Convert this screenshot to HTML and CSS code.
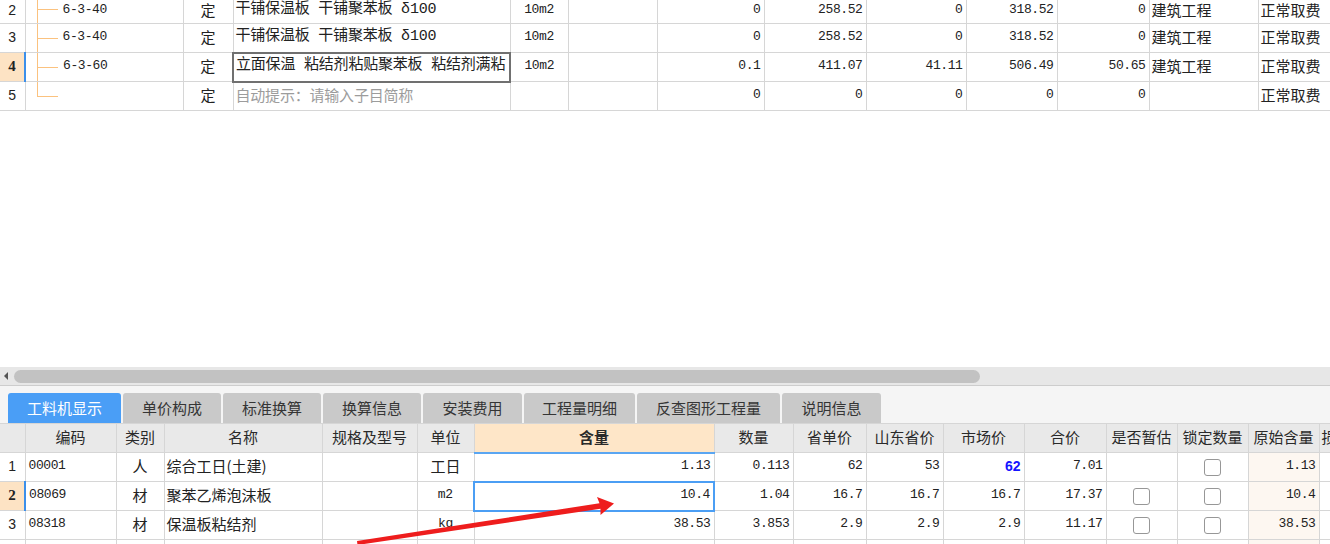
FILE: index.html
```html
<!DOCTYPE html>
<html lang="zh-CN">
<head>
<meta charset="utf-8">
<title>工料机显示</title>
<link rel="stylesheet" href="styles.css">
</head>
<body>
<div class="app">
  <div class="upper">
    <table class="grid top">
      <colgroup>
        <col class="w25"><col style="width:158px"><col style="width:50px"><col style="width:277px"><col style="width:58px"><col style="width:89px"><col style="width:107px"><col style="width:102px"><col style="width:100px"><col style="width:91px"><col style="width:92px"><col style="width:109px"><col style="width:90px">
      </colgroup>
      <tbody>
        <tr class="first">
          <td class="rn">2</td><td class="code tree">6-3-40</td><td class="c">定</td>
          <td class="name">干铺保温板 干铺聚苯板 δ100</td><td class="c mono">10m2</td><td></td>
          <td class="n">0</td><td class="n">258.52</td><td class="n">0</td><td class="n">318.52</td><td class="n">0</td>
          <td class="txt">建筑工程</td><td class="txt">正常取费</td>
        </tr>
        <tr>
          <td class="rn">3</td><td class="code tree">6-3-40</td><td class="c">定</td>
          <td class="name">干铺保温板 干铺聚苯板 δ100</td><td class="c mono">10m2</td><td></td>
          <td class="n">0</td><td class="n">258.52</td><td class="n">0</td><td class="n">318.52</td><td class="n">0</td>
          <td class="txt">建筑工程</td><td class="txt">正常取费</td>
        </tr>
        <tr>
          <td class="rn sel">4</td><td class="code tree cur">6-3-60</td><td class="c">定</td>
          <td class="name edit">立面保温 粘结剂粘贴聚苯板 粘结剂满粘</td><td class="c mono">10m2</td><td></td>
          <td class="n">0.1</td><td class="n">411.07</td><td class="n">41.11</td><td class="n">506.49</td><td class="n">50.65</td>
          <td class="txt">建筑工程</td><td class="txt">正常取费</td>
        </tr>
        <tr>
          <td class="rn">5</td><td class="code tree last"></td><td class="c">定</td>
          <td class="name hint">自动提示：请输入子目简称</td><td></td><td></td>
          <td class="n">0</td><td class="n">0</td><td class="n">0</td><td class="n">0</td><td class="n">0</td>
          <td class="txt"></td><td class="txt">正常取费</td>
        </tr>
      </tbody>
    </table>
  </div>

  <div class="hscroll">
    <span class="arrow-left"></span>
    <span class="thumb"></span>
  </div>

  <div class="tabbar">
    <div class="tab active t1">工料机显示</div>
    <div class="tab t2">单价构成</div>
    <div class="tab t2">标准换算</div>
    <div class="tab t2">换算信息</div>
    <div class="tab t3">安装费用</div>
    <div class="tab t4">工程量明细</div>
    <div class="tab t5">反查图形工程量</div>
    <div class="tab t3">说明信息</div>
  </div>

  <div class="lower">
    <table class="grid bottom">
      <colgroup>
        <col style="width:25px"><col style="width:91px"><col style="width:48px"><col style="width:158px"><col style="width:95px"><col style="width:57px"><col style="width:240px"><col style="width:79px"><col style="width:73px"><col style="width:77px"><col style="width:81px"><col style="width:82px"><col style="width:71px"><col style="width:71px"><col style="width:71px"><col style="width:60px">
      </colgroup>
      <thead>
        <tr>
          <th></th><th>编码</th><th>类别</th><th>名称</th><th>规格及型号</th><th>单位</th>
          <th class="hl">含量</th><th>数量</th><th>省单价</th><th>山东省价</th><th>市场价</th><th>合价</th>
          <th>是否暂估</th><th>锁定数量</th><th>原始含量</th><th class="cut">损耗率</th>
        </tr>
      </thead>
      <tbody>
        <tr>
          <td class="rn">1</td><td class="mono l">00001</td><td class="c">人</td><td class="txt">综合工日(土建)</td><td></td><td class="c">工日</td>
          <td class="n">1.13</td><td class="n">0.113</td><td class="n">62</td><td class="n">53</td><td class="n blue">62</td><td class="n">7.01</td>
          <td></td><td class="c"><span class="cb"></span></td><td class="n orig">1.13</td><td></td>
        </tr>
        <tr>
          <td class="rn sel">2</td><td class="mono l cur">08069</td><td class="c">材</td><td class="txt">聚苯乙烯泡沫板</td><td></td><td class="c mono">m2</td>
          <td class="n focus">10.4</td><td class="n">1.04</td><td class="n">16.7</td><td class="n">16.7</td><td class="n">16.7</td><td class="n">17.37</td>
          <td class="c"><span class="cb"></span></td><td class="c"><span class="cb"></span></td><td class="n orig">10.4</td><td></td>
        </tr>
        <tr>
          <td class="rn">3</td><td class="mono l">08318</td><td class="c">材</td><td class="txt">保温板粘结剂</td><td></td><td class="c mono">kg</td>
          <td class="n">38.53</td><td class="n">3.853</td><td class="n">2.9</td><td class="n">2.9</td><td class="n">2.9</td><td class="n">11.17</td>
          <td class="c"><span class="cb"></span></td><td class="c"><span class="cb"></span></td><td class="n orig">38.53</td><td></td>
        </tr>
        <tr>
          <td class="rn"></td><td></td><td></td><td></td><td></td><td></td>
          <td></td><td></td><td></td><td></td><td></td><td></td>
          <td></td><td></td><td class="orig"></td><td></td>
        </tr>
      </tbody>
    </table>
  </div>

  <svg class="annot" width="1330" height="544" viewBox="0 0 1330 544" aria-hidden="true">
    <polygon fill="#ee1d1d" points="357,541 599.5,503.2 597,497 614,503.5 600.5,515 600.5,508.8 357.5,545"/>
  </svg>
</div>
</body>
</html>
```

FILE: styles.css
```css
* {
  box-sizing: border-box;
  margin: 0;
  padding: 0;
}

html, body {
  width: 1330px;
  height: 544px;
  overflow: hidden;
  background: #ffffff;
}

body {
  font-family: "Noto Sans CJK SC", "Liberation Sans", sans-serif;
  font-size: 15px;
  color: #222222;
}

.app {
  position: relative;
  width: 1330px;
  height: 544px;
  overflow: hidden;
}

/* ---------- grids ---------- */
.grid {
  border-collapse: collapse;
  table-layout: fixed;
}

.grid td,
.grid th {
  border: 1px solid #d6d6d6;
  height: 29px;
  padding: 0 3px 2px;
  white-space: nowrap;
  overflow: hidden;
  line-height: 20px;
  font-weight: normal;
  vertical-align: middle;
}

.grid tr.first td {
  padding-top: 2px;
  padding-bottom: 0;
}

.grid tr > :first-child {
  border-left: none;
}

.top {
  width: 1348px;
  margin-top: -6px;
}

.upper {
  height: 367px;
  overflow: hidden;
}

.w25 { width: 25px; }

.rn {
  text-align: center;
  font-family: "Liberation Sans", sans-serif;
  font-size: 14px;
  padding-left: 0 !important;
  padding-right: 0 !important;
}

.rn.sel {
  background: #fde3c4;
  font-weight: bold;
  font-family: "Liberation Serif", serif;
  font-size: 15px;
}

.c { text-align: center; }
.l { text-align: left; }

.grid td.mono {
  font-family: "Liberation Mono", monospace;
  font-size: 13px;
  letter-spacing: -0.4px;
}

.n {
  text-align: right;
  font-family: "Liberation Mono", monospace;
  font-size: 13px;
  letter-spacing: -0.4px;
  padding-right: 3px !important;
}

.txt {
  text-align: left;
  padding-left: 2px !important;
}

.name {
  font-family: "Liberation Mono", "Noto Sans CJK SC", sans-serif;
  padding-left: 2px !important;
  letter-spacing: -0.2px;
}

.hint {
  color: #9c9c9c;
  font-family: "Noto Sans CJK SC", sans-serif;
}

.edit {
  border: 2px solid #707070 !important;
}

.code {
  font-family: "Liberation Mono", monospace;
  font-size: 13px;
  letter-spacing: -0.4px;
  padding-left: 37px !important;
}

.tree {
  background:
    linear-gradient(#fbc27f, #fbc27f) 11px 0 / 1px 100% no-repeat,
    linear-gradient(#fbc27f, #fbc27f) 11px 50% / 21px 1px no-repeat;
}

.tree.last {
  background:
    linear-gradient(#fbc27f, #fbc27f) 11px 0 / 1px 50% no-repeat,
    linear-gradient(#fbc27f, #fbc27f) 11px 50% / 21px 1px no-repeat;
}

.cur {
  border-left: 2px solid #3b8fea !important;
}

/* ---------- horizontal scrollbar ---------- */
.hscroll {
  height: 19px;
  background: #e7e7e7;
  border-bottom: 1px solid #cdcdcd;
  display: flex;
  align-items: center;
  padding-left: 4px;
  gap: 6px;
}

.arrow-left {
  width: 0;
  height: 0;
  border-top: 4px solid transparent;
  border-bottom: 4px solid transparent;
  border-right: 4px solid #555555;
}

.thumb {
  width: 966px;
  height: 13px;
  border-radius: 7px;
  background: #c2c2c2;
}

/* ---------- tabs ---------- */
.tabbar {
  height: 37px;
  background: #f5f5f5;
  display: flex;
  align-items: flex-end;
  padding-left: 8px;
  gap: 2px;
}

.tab {
  height: 30px;
  padding-bottom: 2px;
  border-radius: 3px 3px 0 0;
  background: #c9c9c9;
  color: #353535;
  display: flex;
  align-items: center;
  justify-content: center;
  font-size: 15px;
}

.tab.active {
  background: #4a9ef6;
  color: #ffffff;
}

.t1 { width: 113px; }
.t2 { width: 98px; }
.t3 { width: 99px; }
.t4 { width: 111px; }
.t5 { width: 143px; }

/* ---------- lower grid ---------- */
.bottom {
  width: 1379px;
}

.bottom th {
  background: #e9e9e9;
  text-align: center;
  color: #2a2a2a;
}

.bottom th.hl {
  background: #fee6c8;
  font-weight: bold;
  border-bottom: 2px solid #5aa6f2;
}

.bottom th.cut {
  text-align: left;
  padding-left: 2px;
}

.orig {
  background: #fdf7f1;
}

.focus {
  border: 2px solid #4b9ef4 !important;
}

.grid td.blue {
  color: #1414ff;
  font-weight: bold;
  font-family: "Liberation Sans", sans-serif;
  font-size: 14px;
  letter-spacing: 0;
}

.cb {
  display: inline-block;
  width: 17px;
  height: 17px;
  border: 1px solid #979797;
  border-radius: 3px;
  background: #ffffff;
  vertical-align: middle;
}

/* ---------- annotation overlay ---------- */
.annot {
  position: absolute;
  left: 0;
  top: 0;
  pointer-events: none;
}
```
